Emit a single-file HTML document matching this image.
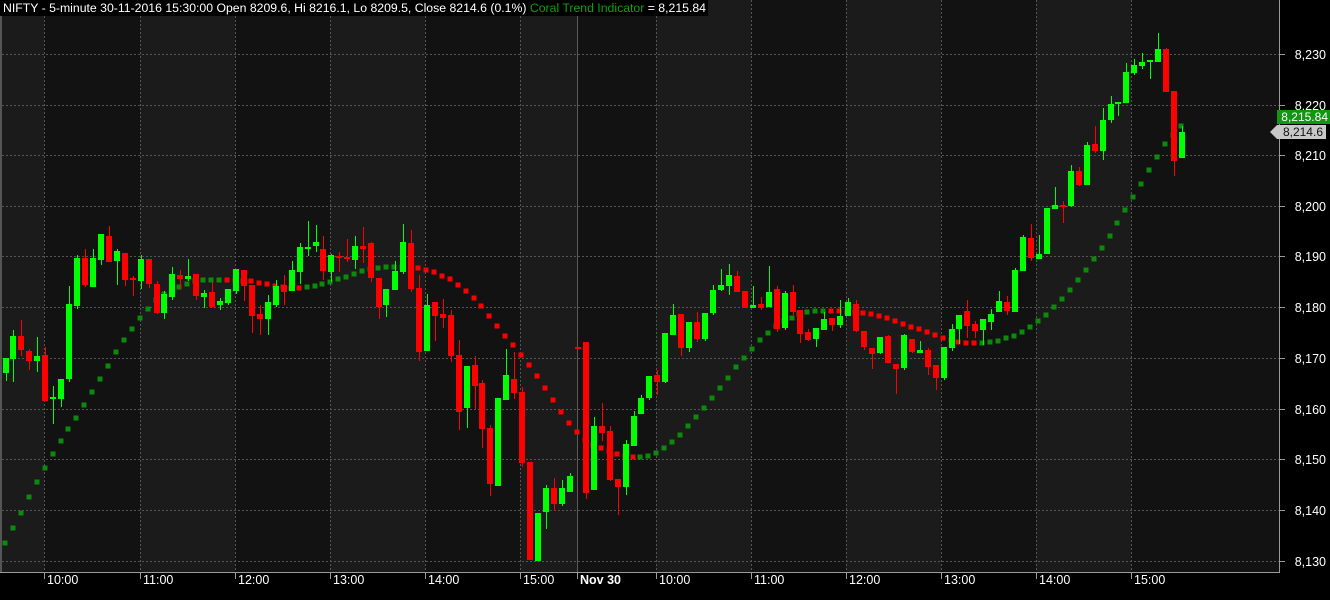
<!DOCTYPE html>
<html><head><meta charset="utf-8"><style>
html,body{margin:0;padding:0;background:#000;width:1330px;height:600px;overflow:hidden}
svg{display:block}
text{font-family:"Liberation Sans",Arial,sans-serif;font-size:12px}
</style></head><body>
<svg id="c" width="1330" height="600" xmlns="http://www.w3.org/2000/svg"></svg>
<script>
var s=document.getElementById('c'),h='';
h+='<rect x="0" y="0" width="1330" height="600" fill="#000"/>';
var b=[0,44,140,235,330,425,520,577,656,751,846,941,1036,1131,1279];
var light=[1,0,1,0,1,0,1,0,1,0,1,0,1,0];
for(var i=0;i<b.length-1;i++){h+='<rect x="'+b[i]+'" y="0" width="'+(b[i+1]-b[i])+'" height="572" fill="'+(light[i]?'#1b1b1b':'#121212')+'"/>';}
h+='<rect x="0" y="0" width="2" height="572" fill="#555"/>';
var ys=[561,510,459,409,358,307,256,206,155,105,54];
ys.forEach(function(y){h+='<line x1="2" y1="'+(y+.5)+'" x2="1279" y2="'+(y+.5)+'" stroke="#555" stroke-dasharray="2,2"/>';});
var vx=[44,140,235,330,425,520,656,751,846,941,1036,1131];
vx.forEach(function(x){h+='<line x1="'+(x+.5)+'" y1="0" x2="'+(x+.5)+'" y2="572" stroke="#555" stroke-dasharray="2,2"/>';});
h+='<line x1="577.5" y1="0" x2="577.5" y2="572" stroke="#5a5a5a"/>';
function D(arr,c){for(var i=0;i<arr.length;i+=2){h+='<rect x="'+(arr[i]-2.5)+'" y="'+(arr[i+1]-2.5)+'" width="5" height="5" fill="'+c+'"/>';}}
var G='#0b8a0b',R='#ff0000';
D([5,543,13,528,21,513,29,497,37,482,45,468,53,454,61,441,68,429,76,418,84,405,92,392,100,379,108,366,116,352,124,340,132,329,140,318,148,309,156,300,164,294,172,290,179,287,187,284,195,281,203,280,211,280,219,280],G);
D([227,280,235,280,243,281,251,281,259,283,267,284,275,286,283,287,291,288,299,288],R);
D([307,287,315,286,322,284,330,282,338,279,346,277,354,274,362,271,370,269,378,268,386,267,394,267,402,267],G);
D([418,268,426,270,434,272,442,276,450,279,458,285,466,291,474,298,481,306,489,316,497,326,505,336,513,345,521,355,529,365,537,376,545,388,553,400,561,412,569,423,577,432,585,440,593,445,601,448,609,451,617,454,625,456,633,457],R);
D([640,457,648,456,656,453,664,448,672,442,680,435,688,426,696,417,704,408,712,398,720,388,728,378,736,367,744,358,752,349,760,340,768,333,776,326,784,321,792,318,799,314,807,312,815,311,823,311],G);
D([831,311,839,311,847,312,855,312,863,313,871,314,879,316,887,318,895,321,903,324,911,327,919,329,927,332,935,335,943,338,951,340,958,342,966,343,974,343],R);
D([982,343,990,342,998,341,1006,338,1014,336,1022,332,1030,327,1038,321,1046,315,1054,307,1062,299,1070,290,1078,280,1086,270,1094,259,1102,248,1110,236,1117,223,1125,210,1133,197,1141,184,1149,170,1157,157,1165,144,1173,135,1181,126],G);
var C=[[6,358,373,358,381,'g'],[13,336,359,330,382,'g'],[21,336,350,320,356,'r'],[29,351,361,349,370,'r'],[37,356,361,337,372,'g'],[45,355,401,347,401,'r'],[53,397,399,386,424,'g'],[61,379,399,379,407,'g'],[69,304,379,286,382,'g'],[77,258,306,255,309,'g'],[85,258,285,249,287,'r'],[93,258,287,249,287,'g'],[101,234,260,234,265,'g'],[109,236,262,226,262,'r'],[117,251,261,249,285,'g'],[125,253,280,253,286,'r'],[133,278,280,276,296,'r'],[141,259,281,255,289,'g'],[149,259,284,259,288,'r'],[157,284,313,281,314,'r'],[164,294,313,291,319,'g'],[172,274,297,267,300,'g'],[180,275,279,270,289,'r'],[188,276,279,259,281,'g'],[196,274,296,274,300,'r'],[204,293,297,290,308,'g'],[212,292,307,282,307,'r'],[220,301,305,298,310,'g'],[228,289,303,289,305,'g'],[236,269,291,269,294,'g'],[244,270,286,270,301,'r'],[252,285,316,285,333,'r'],[260,314,319,305,335,'r'],[268,302,319,295,335,'g'],[276,286,305,280,307,'g'],[284,285,292,275,305,'r'],[292,270,291,261,291,'g'],[300,247,272,243,284,'g'],[308,247,249,221,256,'g'],[316,242,246,225,252,'g'],[323,249,271,236,280,'r'],[331,255,272,254,282,'g'],[339,256,258,252,272,'r'],[347,257,259,239,262,'r'],[355,246,260,236,269,'g'],[363,246,249,227,263,'r'],[371,243,278,242,282,'r'],[379,278,307,278,319,'r'],[386,289,305,289,317,'g'],[395,271,290,261,290,'g'],[403,242,272,224,274,'g'],[411,243,289,230,292,'r'],[419,288,352,275,361,'r'],[427,305,351,294,351,'g'],[435,302,316,302,341,'r'],[443,314,318,299,328,'r'],[451,315,356,310,362,'r'],[459,355,412,340,430,'r'],[467,366,408,366,428,'g'],[475,365,386,356,409,'r'],[482,383,429,380,448,'r'],[490,428,484,425,496,'r'],[498,398,486,398,486,'g'],[506,375,400,349,400,'g'],[514,379,393,352,399,'r'],[522,392,463,387,467,'r'],[530,462,560,462,560,'r'],[538,513,561,513,561,'g'],[546,488,512,485,529,'g'],[554,488,504,478,511,'r'],[562,488,504,480,506,'g'],[570,476,492,473,492,'g'],
[578,347,348,347,348,'r'],[586,342,493,342,499,'r'],[594,426,490,417,490,'g'],[602,426,433,403,441,'r'],[610,431,480,426,481,'r'],[618,479,487,479,515,'r'],[626,444,487,440,495,'g'],[634,416,446,411,446,'g'],[641,398,414,395,414,'g'],[649,376,398,376,400,'g'],[657,375,382,370,395,'r'],[665,333,382,333,383,'g'],[673,315,335,304,335,'g'],[681,314,348,314,356,'r'],[689,322,348,322,352,'g'],[697,322,339,312,342,'r'],[705,313,339,313,341,'g'],[713,290,313,285,315,'g'],[721,285,290,269,291,'g'],[729,275,286,264,295,'g'],[737,276,292,271,292,'r'],[745,291,308,291,308,'r'],[753,305,308,286,308,'g'],[761,304,308,297,310,'r'],[769,292,307,266,307,'g'],[777,289,329,286,332,'r'],[785,293,328,291,330,'g'],[793,292,312,285,315,'r'],[800,310,334,310,343,'r'],[808,332,340,329,341,'r'],[816,328,339,328,347,'g'],[824,319,330,312,330,'g'],[832,318,325,318,331,'r'],[840,316,325,300,328,'g'],[848,302,316,298,316,'g'],[856,304,331,300,332,'r'],[864,331,347,331,350,'r'],[872,348,354,348,369,'r'],[880,337,353,337,354,'g'],[888,336,363,335,363,'r'],[896,364,369,364,394,'r'],[904,335,368,334,370,'g'],[912,339,352,339,353,'r'],[920,350,353,341,353,'g'],[928,350,367,348,375,'r'],[936,365,378,365,390,'r'],[944,347,378,347,380,'g'],[952,329,348,324,351,'g'],[959,315,329,315,344,'g'],[967,311,326,300,338,'r'],[975,324,331,321,338,'r'],[983,319,330,319,345,'g'],[991,314,322,309,330,'g'],[999,301,312,291,312,'g'],[1007,302,311,296,315,'r'],[1015,270,312,268,312,'g'],[1023,237,271,235,271,'g'],[1031,238,258,224,261,'r'],[1039,254,259,235,259,'g'],[1047,208,254,208,254,'g'],[1055,205,209,187,209,'g'],[1063,205,207,201,223,'r'],[1071,171,206,165,207,'g'],[1079,171,185,167,186,'r'],[1087,145,185,142,185,'g'],[1095,144,151,126,153,'r'],[1103,120,151,108,160,'g'],[1111,104,120,96,123,'g'],[1118,102,104,102,116,'g'],[1126,72,103,63,103,'g'],[1134,65,73,59,75,'g'],[1142,62,66,53,69,'g'],[1150,60,62,60,79,'g'],[1158,49,62,33,62,'g'],[1166,49,92,48,92,'r'],[1174,91,161,91,176,'r'],[1182,132,158,126,158,'g']];
C.forEach(function(c){var col=c[5]=='g'?'#00ff00':'#ff0000';
h+='<rect x="'+c[0]+'" y="'+c[3]+'" width="1" height="'+Math.max(1,c[4]-c[3])+'" fill="'+col+'"/>';
h+='<rect x="'+(c[0]-3)+'" y="'+c[1]+'" width="6" height="'+Math.max(2,c[2]-c[1])+'" fill="'+col+'"/>';});
h+='<rect x="1279" y="0" width="51" height="600" fill="#000"/><rect x="0" y="572" width="1330" height="28" fill="#000"/>';
h+='<line x1="1279.5" y1="0" x2="1279.5" y2="573" stroke="#9a9a9a"/><line x1="0" y1="572.5" x2="1280" y2="572.5" stroke="#9a9a9a"/>';
var pr=['8,130','8,140','8,150','8,160','8,170','8,180','8,190','8,200','8,210','8,220','8,230'];
ys.forEach(function(y,i){h+='<line x1="1280" y1="'+(y+.5)+'" x2="1285" y2="'+(y+.5)+'" stroke="#9a9a9a"/>';
h+='<text x="1326" y="'+(y+5)+'" fill="#fff" text-anchor="end" style="font-size:12.5px">'+pr[i]+'</text>';});
var tl=[[44,'10:00'],[140,'11:00'],[235,'12:00'],[330,'13:00'],[425,'14:00'],[520,'15:00'],[577,'Nov 30'],[656,'10:00'],[751,'11:00'],[846,'12:00'],[941,'13:00'],[1036,'14:00'],[1131,'15:00']];
tl.forEach(function(t){h+='<line x1="'+(t[0]+.5)+'" y1="573" x2="'+(t[0]+.5)+'" y2="579" stroke="#9a9a9a"/>';
h+='<text x="'+(t[0]+3)+'" y="584" fill="#fff" style="font-size:12.5px"'+(t[1]=='Nov 30'?' font-weight="bold"':'')+'>'+t[1]+'</text>';});
h+='<rect x="1277" y="110" width="53" height="14" fill="#129612"/><text x="1328" y="121" fill="#fff" text-anchor="end">8,215.84</text>';
h+='<polygon points="1270,132 1277,125 1326,125 1326,139 1277,139" fill="#c8c8c8"/><text x="1323" y="136" fill="#111" text-anchor="end">8,214.6</text>';
h+='<rect x="0" y="0" width="708" height="16" fill="#000"/>';
h+='<text x="3" y="12" fill="#fff" textLength="703" lengthAdjust="spacingAndGlyphs" style="font-size:12.4px">NIFTY - 5-minute 30-11-2016 15:30:00 Open 8209.6, Hi 8216.1, Lo 8209.5, Close 8214.6 (0.1%) <tspan fill="#10a010">Coral Trend Indicator</tspan> = 8,215.84</text>';
s.innerHTML=h;
</script>
</body></html>
